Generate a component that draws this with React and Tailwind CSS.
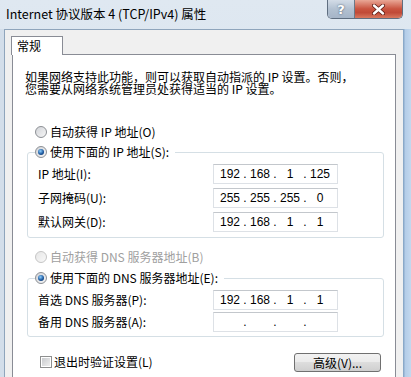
import React from 'react';

const cjk = "font-['Noto_Sans_CJK_SC',sans-serif]";

const Radio = ({ checked, disabled }) => (
  <span
    className={`flex items-center justify-center w-[12px] h-[12px] rounded-full border shrink-0 ${
      disabled
        ? 'border-[#c5c5c5] bg-[linear-gradient(135deg,#e6e6e6,#f8f8f8)]'
        : 'border-[#8c8f94] bg-[linear-gradient(135deg,#d2d4d8,#f6f6f6)]'
    }`}
  >
    {checked && (
      <span className="w-[6px] h-[6px] rounded-full bg-[radial-gradient(circle_at_40%_35%,#8fd0ff,#1d5aa0_55%,#0d2b5a)]" />
    )}
  </span>
);

const RadioRow = ({ checked, disabled, children }) => (
  <div className={`flex items-center gap-[3px] h-[12px] leading-[12px] ${disabled ? 'text-[#a0a0a0]' : 'text-black'}`}>
    <Radio checked={checked} disabled={disabled} />
    <span>{children}</span>
  </div>
);

// four octets, dots between them
const IpField = ({ parts }) => (
  <div className="flex items-center h-[20px] w-[125px] bg-white border border-[#dde1e6] border-t-[#c3c7cc] pl-[4px] font-['Liberation_Sans',sans-serif] text-[12px] text-black">
    {parts.map((p, i) => (
      <React.Fragment key={i}>
        {i > 0 && <span className="w-[6px] text-center leading-[12px]">.</span>}
        <span className="w-[24px] text-center leading-[12px]">{p}</span>
      </React.Fragment>
    ))}
  </div>
);

const FieldRow = ({ label, parts }) => (
  <div className="grid grid-cols-[175px_125px] items-center">
    <span className="leading-[12px]">{label}</span>
    <IpField parts={parts} />
  </div>
);

const GroupBox = ({ legend, children, className = '' }) => (
  <fieldset className={`w-[357px] ml-[2px] border border-[#d5dfe5] rounded-[3px] pl-[10px] ${className}`}>
    <legend className="ml-[-3px] pr-[6px]">
      <RadioRow checked>{legend}</RadioRow>
    </legend>
    {children}
  </fieldset>
);

export default function App() {
  return (
    <div className={`w-[411px] h-[377px] overflow-hidden bg-[linear-gradient(180deg,#dfe8f1,#d2deea)] ${cjk} text-[12px] text-black`}>
      {/* title bar */}
      <div className="flex h-[29px] items-start">
        <div className="pl-[6px] pt-[6px] text-[12.5px] leading-[16px] text-black">Internet 协议版本 4 (TCP/IPv4) 属性</div>
        <div className="ml-auto mr-[8px] flex h-[19px] border border-t-0 border-[#5f6e80] rounded-b-[5px] overflow-hidden">
          <div className="flex items-center justify-center w-[27px] bg-[linear-gradient(180deg,#d3dce7,#b3c1d1_50%,#a5b5c8)] border-r border-[#6b7887] text-white font-bold text-[13px] leading-none font-['DejaVu_Sans',sans-serif] [text-shadow:0_0_2px_#34465c]">
            ?
          </div>
          <div className="flex items-center justify-center w-[47px] bg-[linear-gradient(180deg,#e9a796,#c9533f_50%,#c04a38_70%,#d9785f)]">
            <svg width="13" height="11" viewBox="0 0 13 11">
              <path d="M2 1.5 L11 9.5 M11 1.5 L2 9.5" stroke="#5b1a12" strokeWidth="4" strokeLinecap="round" />
              <path d="M2 1.5 L11 9.5 M11 1.5 L2 9.5" stroke="#ffffff" strokeWidth="2.4" strokeLinecap="round" />
            </svg>
          </div>
        </div>
      </div>

      {/* window body */}
      <div className="flex h-[348px]">
        <div className="w-[4px] bg-[#d3deea]" />
        <div className="flex-1 bg-[#f0f0f0] border-l border-t border-[#8fa5bc] pl-[6px] pt-[6px]">
          {/* tab */}
          <div className="relative z-10 w-[52px] h-[19px] -mb-[1px] bg-white border border-b-0 border-[#898c95] pl-[5px] pt-[2px] leading-[14px] text-[12px]">
            常规
          </div>
          {/* tab panel */}
          <div className="ml-[1px] w-[384px] h-[340px] bg-white border border-[#898c95] pl-[12px] pt-[16px]">
            <p className="leading-[12px]">
              如果网络支持此功能，则可以获取自动指派的 IP 设置。否则，
              <br />
              您需要从网络系统管理员处获得适当的 IP 设置。
            </p>

            <div className="mt-[31px] ml-[10px]">
              <RadioRow>自动获得 IP 地址(O)</RadioRow>
            </div>

            <GroupBox legend="使用下面的 IP 地址(S):" className="mt-[8px] pb-[5px]">
              <div className="mt-[6px] flex flex-col gap-[4px]">
                <FieldRow label="IP 地址(I):" parts={['192', '168', '1', '125']} />
                <FieldRow label="子网掩码(U):" parts={['255', '255', '255', '0']} />
                <FieldRow label="默认网关(D):" parts={['192', '168', '1', '1']} />
              </div>
            </GroupBox>

            <div className="mt-[13px] ml-[10px]">
              <RadioRow disabled>自动获得 DNS 服务器地址(B)</RadioRow>
            </div>

            <GroupBox legend="使用下面的 DNS 服务器地址(E):" className="mt-[9px] pb-[4px]">
              <div className="mt-[6px] flex flex-col gap-[2px]">
                <FieldRow label="首选 DNS 服务器(P):" parts={['192', '168', '1', '1']} />
                <FieldRow label="备用 DNS 服务器(A):" parts={['', '', '', '']} />
              </div>
            </GroupBox>

            <div className="mt-[16px] ml-[15px] w-[341px] flex items-center justify-between">
              <div className="flex items-center gap-[2px] mt-[-2px]">
                <span className="w-[12px] h-[12px] border border-[#8e8f8f] bg-white p-[1px]">
                  <span className="block w-full h-full bg-[linear-gradient(135deg,#c9cbce,#eeeeee)]" />
                </span>
                <span className="leading-[12px]">退出时验证设置(L)</span>
              </div>
              <button className="w-[87px] h-[19px] rounded-[3px] border border-[#707070] bg-[linear-gradient(180deg,#f2f2f2,#ebebeb_45%,#dddddd_50%,#cfcfcf)] text-[12px] leading-[12px] text-black">
                高级(V)...
              </button>
            </div>
          </div>
        </div>
        <div className="w-[8px] bg-[linear-gradient(90deg,#7f9fc0,#b4cde8_30%,#c3d8ee)]" />
      </div>
    </div>
  );
}
